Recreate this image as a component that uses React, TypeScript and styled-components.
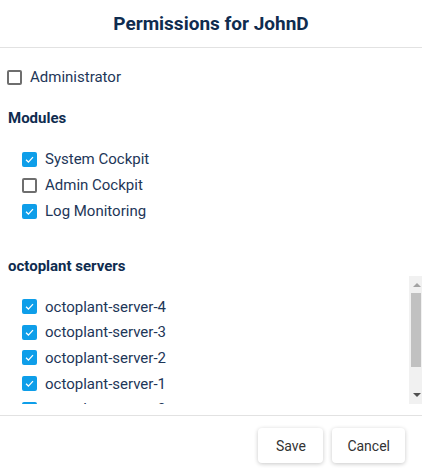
import styled, { createGlobalStyle } from "styled-components";

const GlobalStyle = createGlobalStyle`
  html, body {
    margin: 0;
    padding: 0;
    background: #ffffff;
  }
  body {
    font-family: Roboto, "Liberation Sans", sans-serif;
    color: #1d3658;
  }
`;

const modules = [
  { name: "System Cockpit", checked: true },
  { name: "Admin Cockpit", checked: false },
  { name: "Log Monitoring", checked: true },
];

const servers = [
  { name: "octoplant-server-4", checked: true },
  { name: "octoplant-server-3", checked: true },
  { name: "octoplant-server-2", checked: true },
  { name: "octoplant-server-1", checked: true },
  { name: "octoplant-server-0", checked: true },
];

const CheckBox = ({ checked }: { checked: boolean }) => (
  <Box $checked={checked}>
    {checked && (
      <svg width="11" height="11" viewBox="0 0 12 12">
        <path
          d="M2.2 6.3 L4.8 8.8 L9.8 3.4"
          fill="none"
          stroke="#ffffff"
          strokeWidth="1.4"
        />
      </svg>
    )}
  </Box>
);

export default function App() {
  return (
    <Dialog>
      <GlobalStyle />
      <Header>
        <h1>Permissions for JohnD</h1>
      </Header>
      <Content>
        <Row $height={20}>
          <CheckBox checked={false} />
          <span>Administrator</span>
        </Row>
        <SectionTitle $top={21}>Modules</SectionTitle>
        <List $top={18}>
          {modules.map((m) => (
            <Row key={m.name} $height={26}>
              <CheckBox checked={m.checked} />
              <span>{m.name}</span>
            </Row>
          ))}
        </List>
        <SectionTitle $top={32}>octoplant servers</SectionTitle>
        <ScrollArea>
          <ScrollList>
            {servers.map((s) => (
              <Row key={s.name} $height={25.6}>
                <CheckBox checked={s.checked} />
                <span>{s.name}</span>
              </Row>
            ))}
          </ScrollList>
          <Scrollbar>
            <ArrowButton>
              <Arrow $up />
            </ArrowButton>
            <ThumbTrack>
              <Thumb />
            </ThumbTrack>
            <ArrowButton>
              <Arrow />
            </ArrowButton>
          </Scrollbar>
        </ScrollArea>
      </Content>
      <Footer>
        <Button>Save</Button>
        <Button>Cancel</Button>
      </Footer>
    </Dialog>
  );
}

const Dialog = styled.div`
  width: 422px;
  height: 474px;
  display: flex;
  flex-direction: column;
  background: #ffffff;
`;

const Header = styled.header`
  height: 47px;
  border-bottom: 1px solid #e2e2e2;
  display: flex;
  align-items: center;
  justify-content: center;
  h1 {
    margin: 0;
    font-size: 19px;
    font-weight: 700;
    color: #0f2c4f;
  }
`;

const Content = styled.main`
  padding: 19px 0 0 7px;
  display: flex;
  flex-direction: column;
`;

const Row = styled.label<{ $height: number }>`
  height: ${(p) => p.$height}px;
  flex-shrink: 0;
  display: flex;
  align-items: center;
  gap: 8px;
  font-size: 15px;
  color: #1d3658;
`;

const Box = styled.span<{ $checked: boolean }>`
  width: 15px;
  height: 15px;
  box-sizing: border-box;
  border-radius: 2px;
  border: ${(p) => (p.$checked ? "none" : "2px solid #6e6e6e")};
  background: ${(p) => (p.$checked ? "#0e9ee9" : "#ffffff")};
  display: flex;
  align-items: center;
  justify-content: center;
  flex-shrink: 0;
`;

const SectionTitle = styled.h2<{ $top: number }>`
  margin: ${(p) => p.$top}px 0 0 1px;
  height: 20px;
  line-height: 20px;
  font-size: 15px;
  font-weight: 700;
  color: #0f2c4f;
`;

const List = styled.div<{ $top: number }>`
  margin-top: ${(p) => p.$top}px;
  padding-left: 15px;
  display: flex;
  flex-direction: column;
`;

const ScrollArea = styled.div`
  height: 128px;
  display: flex;
`;

const ScrollList = styled.div`
  flex: 1;
  overflow: hidden;
  padding: 18px 0 0 15px;
  display: flex;
  flex-direction: column;
`;

const Scrollbar = styled.div`
  width: 13px;
  background: #f1f1f1;
  display: flex;
  flex-direction: column;
`;

const ArrowButton = styled.div`
  height: 16px;
  display: flex;
  align-items: center;
  justify-content: center;
  padding-left: 3px;
`;

const Arrow = styled.span<{ $up?: boolean }>`
  width: 0;
  height: 0;
  border-left: 4px solid transparent;
  border-right: 4px solid transparent;
  ${(p) =>
    p.$up
      ? "border-bottom: 4px solid #a3a3a3; margin-top: 2px;"
      : "border-top: 4px solid #505050; margin-top: -2px;"}
`;

const ThumbTrack = styled.div`
  flex: 1;
  padding: 1px 1px 0 2px;
`;

const Thumb = styled.div`
  height: 74px;
  background: #c1c1c1;
`;

const Footer = styled.footer`
  margin-top: 11px;
  border-top: 1px solid #e2e2e2;
  padding: 12px 17px 0 0;
  display: flex;
  justify-content: flex-end;
  gap: 9px;
`;

const Button = styled.button`
  height: 35px;
  min-width: 65px;
  padding: 0 15px;
  border: none;
  border-radius: 4px;
  background: #ffffff;
  box-shadow: 0 1px 4px rgba(0, 0, 0, 0.22);
  font-family: Roboto, "Liberation Sans", sans-serif;
  font-size: 14px;
  color: #333333;
  cursor: pointer;
`;
